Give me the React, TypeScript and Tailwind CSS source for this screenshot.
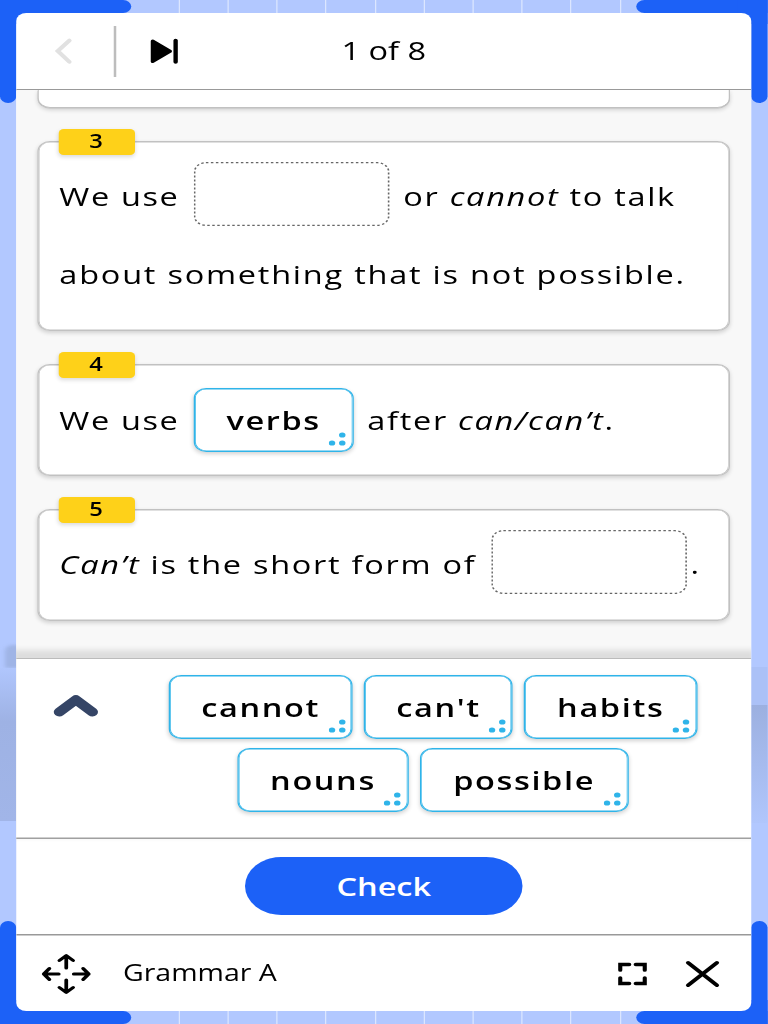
import type { ReactNode } from "react";

const GRID_LINES = [142.8, 182, 221.2, 260.4, 299.6, 338.8, 378, 417.2, 456.4, 495.6];

function Dots() {
  return (
    <svg className="absolute right-[4.6px] bottom-[5px]" width="14" height="14" viewBox="0 0 14 14" fill="#2fb4e9">
      <circle cx="10.8" cy="3" r="2.6" />
      <circle cx="2.6" cy="11" r="2.6" />
      <circle cx="10.8" cy="11" r="2.6" />
    </svg>
  );
}

function Chip({ label, className }: { label: string; className: string }) {
  return (
    <div
      className={`relative flex h-[64px] shrink-0 items-center justify-center rounded-[10px] border border-[#2fb4e9] bg-white font-semibold shadow-[inset_0_0_0_0.6px_#2fb4e9,0_2px_4px_rgba(0,0,0,0.18)] ${className}`}
    >
      <span className="pb-px tracking-[1.3px]">{label}</span>
      <Dots />
    </div>
  );
}

function Blank() {
  return (
    <svg className="mb-[6px] shrink-0" width="157" height="64" viewBox="0 0 157 64" fill="none">
      <rect x="0.7" y="0.7" width="155.2" height="62.6" rx="9" stroke="#666" strokeWidth="1.3" strokeDasharray="2 2" />
    </svg>
  );
}

function Card({ number, children }: { number: number; children: ReactNode }) {
  return (
    <div className="relative shrink-0 rounded-[10px] border border-[#c1c1c1] bg-white py-[23px] pl-[16.4px] shadow-[inset_0_0_0_0.6px_#c1c1c1,0_2px_4px_rgba(0,0,0,0.16)]">
      <div className="absolute -top-[13px] left-[15.7px] flex h-[26px] w-[61px] items-center justify-center rounded bg-[#fed119] pr-px pb-[2px] text-[19px] font-semibold shadow-[0_2px_4px_rgba(0,0,0,0.15)]">
        {number}
      </div>
      {children}
    </div>
  );
}

function Row({ children }: { children: ReactNode }) {
  return <div className="flex h-16 items-center whitespace-pre">{children}</div>;
}

function Corner({ className }: { className: string }) {
  return (
    <div className={`absolute h-[103px] w-[105px] ${className}`}>
      <div className="absolute inset-x-0 top-0 h-[13px] rounded-r-full bg-[#1c61f7]" />
      <div className="absolute inset-y-0 left-0 w-[13px] rounded-b-full bg-[#1c61f7]" />
      <div className="absolute top-0 left-0 h-6 w-6 bg-[#1c61f7]" />
    </div>
  );
}

export default function App() {
  return (
    <div className="h-[1024px] w-[768px] overflow-hidden bg-[#b2c8ff]">
      {/* everything is laid out on a 614.4px wide stage and widened to fill the window */}
      <div className="relative flex h-[1024px] w-[614.4px] origin-top-left scale-x-125 flex-col py-[13px] pr-[13.2px] pl-[12.8px] font-['Open_Sans','Noto_Sans',sans-serif] text-[26px] leading-none text-black">
        {GRID_LINES.map((x) => (
          <div key={x} className="absolute inset-y-0 w-px bg-[#dce6ff]" style={{ left: x }} />
        ))}
        <div className="absolute top-[645px] left-[4px] h-[23px] w-5 rounded-tl-md bg-[#9fb4e6] blur-[1.5px]" />
        <div className="absolute top-[668px] left-0 h-[153px] w-[13px] bg-linear-to-b from-[#b0c6fd] via-[#9eb2e4] via-35% to-[#a1b5e8]" />
        <div className="absolute top-[667px] right-0 h-[38px] w-[13.4px] bg-[#abc1f7]" />
        <div className="absolute top-[705px] right-0 h-[118px] w-[13.4px] bg-linear-to-b from-[#9cb0e0] to-[#b0c6fc]" />
        <Corner className="top-0 left-0" />
        <Corner className="top-0 right-0 -scale-x-100" />
        <Corner className="bottom-0 left-0 -scale-y-100" />
        <Corner className="right-0 bottom-0 -scale-100" />

        <div className="relative flex flex-1 flex-col overflow-hidden rounded-lg bg-white">
          <header className="grid h-[77px] shrink-0 grid-cols-3 items-center border-b border-[#999] shadow-[0_0.5px_0_#999]">
            <div className="flex items-center">
              <svg className="ml-[30.6px]" width="16" height="28" viewBox="0 0 16 28" fill="none" stroke="#e1e1e1" strokeWidth="3.6" strokeLinecap="round">
                <path d="M12.5 3.5 3.2 14l9.3 10.8" />
              </svg>
              <div className="ml-[31.6px] h-[51px] w-[1.6px] bg-[#bdbdbd]" />
              <svg className="ml-[27.4px]" width="24" height="28" viewBox="0 0 24 28">
                <path d="M2.1 4 16.1 14.3 2.100 24.5Z" stroke="#000" strokeWidth="3" strokeLinejoin="round" />
                <path d="M20.5 3.4v21.6" stroke="#000" strokeWidth="3.5" strokeLinecap="round" />
              </svg>
            </div>
            <div className="pb-[2px] text-center">1 of 8</div>
          </header>

          <main className="flex h-[568px] shrink-0 flex-col gap-[33px] overflow-hidden bg-[#f8f8f8] px-[17.3px]">
            <div className="h-[18px] shrink-0 rounded-b-[10px] border border-t-0 border-[#c1c1c1] bg-white shadow-[0_0.5px_0_#c1c1c1,0_2px_4px_rgba(0,0,0,0.16)]" />
            <Card number={3}>
              <Row>
                <span className="w-[107.2px] pb-[2px] tracking-[1.3px]">We use</span>
                <Blank />
                <span className="ml-[11px] pb-[2px] tracking-[1.35px]">or <i>cannot</i> to talk</span>
              </Row>
              <div className="mt-[14px]">
                <Row>
                  <span className="pb-[2px] tracking-[1.41px]">about something that is not possible.</span>
                </Row>
              </div>
            </Card>
            <Card number={4}>
              <Row>
                <span className="w-[107.4px] pb-px tracking-[1.3px]">We use</span>
                <Chip label="verbs" className="w-[128px]" />
                <span className="ml-[11px] pb-px tracking-[1.35px]">after <i>can/can’t</i>.</span>
              </Row>
            </Card>
            <Card number={5}>
              <Row>
                <span className="w-[345.5px] pb-[2px] tracking-[1.38px]"><i>Can’t</i> is the short form of</span>
                <Blank />
                <span className="ml-[2.5px] pb-[2px]">.</span>
              </Row>
            </Card>
          </main>

          <section className="relative flex h-[181px] shrink-0 border-y border-t-[#bbb] border-b-[#a0a0a0] bg-white pt-[16px] shadow-[0_-5px_5px_3px_rgba(0,0,0,0.11),inset_0_-0.6px_0_#a0a0a0]">
            <svg className="mt-[16px] ml-[28px]" width="40" height="30" viewBox="0 0 40 30" fill="none" stroke="#354566" strokeWidth="9" strokeLinecap="round" strokeLinejoin="round">
              <path d="M6.5 21 19.7 8.8l13.2 12.2" />
            </svg>
            <div className="ml-[24px] flex w-[483px] flex-col items-center gap-[9px]">
              <div className="flex gap-[8.8px]">
                <Chip label="cannot" className="w-[147.6px]" />
                <Chip label="can't" className="w-[119.4px]" />
                <Chip label="habits" className="w-[138.6px]" />
              </div>
              <div className="flex gap-[8.8px]">
                <Chip label="nouns" className="w-[137.2px]" />
                <Chip label="possible" className="w-[167px]" />
              </div>
            </div>
          </section>

          <div className="flex h-[96px] shrink-0 items-center justify-center border-b border-[#999] pb-px shadow-[0_0.5px_0_#999]">
            <button className="h-[58px] w-[222.6px] rounded-full bg-[#1c61f7] pb-px font-semibold text-white">Check</button>
          </div>

          <footer className="flex flex-1 items-center pt-px text-[22.8px]">
            <svg className="ml-[20px]" width="40" height="42" viewBox="0 0 40 42" fill="none" stroke="#000" strokeWidth="3" strokeLinecap="round" strokeLinejoin="round">
              <path d="M20 15V3M14.5 7.5 20 2.5l5.5 5M20 27v12M14.5 34.5l5.5 5 5.5-5M14 21H2M6.500 15.5 2 21l4.5 5.5M26 21h12M33.5 15.5 38 21l-4.5 5.5" />
            </svg>
            <span className="ml-[25.6px] pb-px">Grammar A</span>
            <svg className="mr-[29.6px] ml-auto" width="24" height="24" viewBox="0 0 24 24" fill="none" stroke="#000" strokeWidth="3.3" strokeLinecap="round">
              <path d="M2.2 8.2V2.5h7.200M14.6 2.5h7.200v5.7M21.8 15.8v5.7h-7.200M9.4 21.5H2.2v-5.7" />
            </svg>
            <svg className="mr-[25.2px]" width="28" height="28" viewBox="0 0 28 28" stroke="#000" strokeWidth="3.5" strokeLinecap="round">
              <path d="m2.500 2.8 23 22.4M25.5 2.8l-23 22.4" />
            </svg>
          </footer>
        </div>
      </div>
    </div>
  );
}
